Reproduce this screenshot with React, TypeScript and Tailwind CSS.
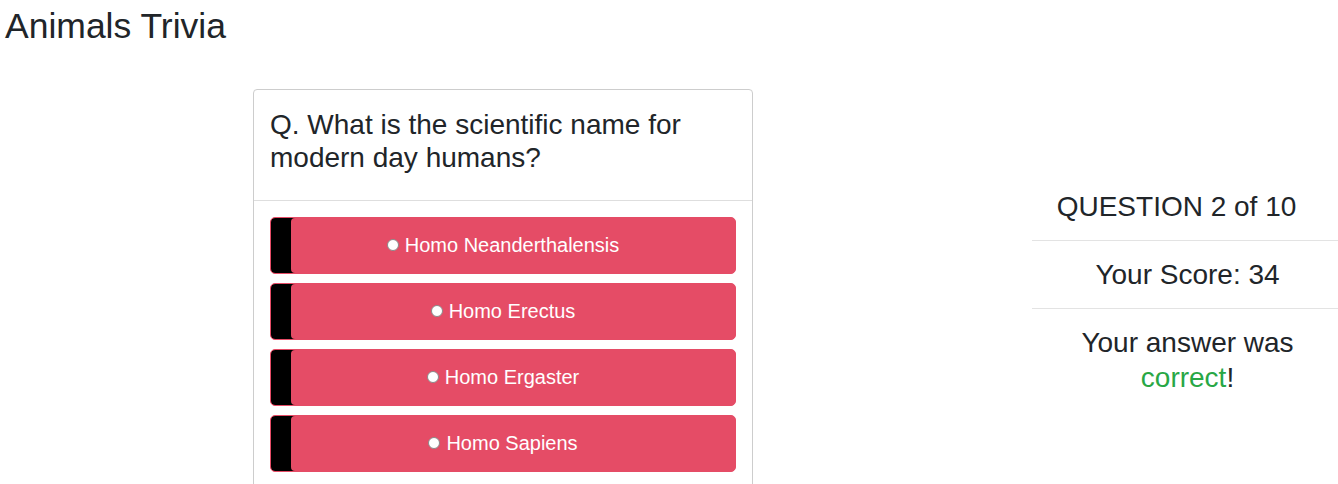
const answers = [
  "Homo Neanderthalensis",
  "Homo Erectus",
  "Homo Ergaster",
  "Homo Sapiens",
];

function AnswerButton({ label }: { label: string }) {
  return (
    <button className="flex h-[57px] w-full items-center justify-center gap-[6px] rounded-[5px] border border-[#e54c66] bg-[#e54c66] text-[20px] text-white shadow-[inset_20px_0_0_0_#000]">
      <span className="h-[12px] w-[12px] rounded-full border border-[#8a8a8a] bg-white" />
      {label}
    </button>
  );
}

function App() {
  return (
    <div className="min-h-[484px] overflow-hidden bg-white font-['Liberation_Sans',Arial,sans-serif] text-[#212529]">
      <h1 className="pl-[5px] pt-[5px] text-[35.5px] leading-[1.2]">Animals Trivia</h1>

      <div className="mt-[41px] flex items-center">
        <section className="ml-[253px] w-[500px] shrink-0 rounded-[4px] border border-[#cdcdcd]">
          <div className="border-b border-[#dedede] px-[16px] pb-[25px] pt-[18px]">
            <h3 className="text-[28px] leading-[1.2]">
              Q. What is the scientific name for modern day humans?
            </h3>
          </div>
          <div className="flex flex-col gap-[9px] p-[16px]">
            {answers.map((a) => (
              <AnswerButton key={a} label={a} />
            ))}
          </div>
        </section>

        <aside className="ml-auto mt-[6px] w-[306px] text-center text-[28px] leading-[1.25]">
          <div className="border-b border-[#e3e3e3] py-[16px] pl-[5px] pr-[22px]">QUESTION 2 of 10</div>
          <div className="border-b border-[#e3e3e3] py-[16px] pl-[5px]">Your Score: 34</div>
          <div className="py-[16px] pl-[17px] pr-[12px]">
            Your answer was <span className="text-[#28a745]">correct</span>!
          </div>
        </aside>
      </div>
    </div>
  );
}

export default App;
